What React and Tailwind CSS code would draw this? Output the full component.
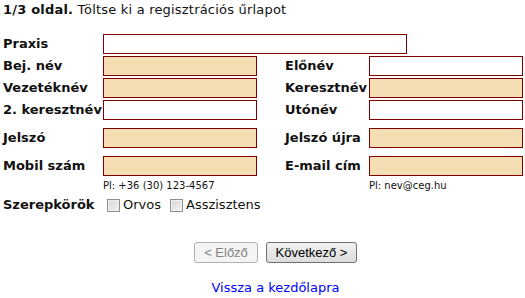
import React from "react";

const inputBase = "h-[20px] border border-[#800000] outline-none";

function Field({ label, req, wide, className = "" }) {
  return (
    <>
      <div className={`font-bold text-[13px] leading-[20px] ${className}`}>{label}</div>
      <input
        type="text"
        className={`${inputBase} ${wide ? "w-[304px]" : "w-[154px]"} ${req ? "bg-[#f5deb3]" : "bg-white"}`}
      />
    </>
  );
}

function Row({ left, right, wide }) {
  return (
    <div className="flex items-center">
      <Field {...left} wide={wide} className="w-[100px]" />
      {right && <Field {...right} className="ml-[28px] w-[84px]" />}
    </div>
  );
}

function Check({ label, className = "" }) {
  return (
    <label className={`flex items-center ${className}`}>
      <input
        type="checkbox"
        className="appearance-none w-[13px] h-[13px] m-0 border border-[#8f8f8f] bg-gradient-to-br from-[#d6d6d6] to-[#f4f4f4] shadow-[inset_0_0_0_1px_#f0f0f0]"
      />
      <span className="ml-[3px]">{label}</span>
    </label>
  );
}

export default function App() {
  return (
    <div
      className="w-[525px] h-[298px] bg-white text-[#111] overflow-hidden"
      style={{ fontFamily: '"DejaVu Sans", Verdana, sans-serif' }}
    >
      <div className="pl-[3px] pt-[2px] text-[13px] leading-[16px] tracking-[0.2px]">
        <span className="font-bold">1/3 oldal.</span> Töltse ki a regisztrációs űrlapot
      </div>

      <div className="pl-[3px] mt-[16px] flex flex-col">
        <Row left={{ label: "Praxis" }} wide />
        <div className="mt-[2px]">
          <Row left={{ label: "Bej. név", req: true }} right={{ label: "Előnév" }} />
        </div>
        <div className="mt-[2px]">
          <Row left={{ label: "Vezetéknév", req: true }} right={{ label: "Keresztnév", req: true }} />
        </div>
        <div className="mt-[2px]">
          <Row left={{ label: "2. keresztnév" }} right={{ label: "Utónév" }} />
        </div>
        <div className="mt-[8px]">
          <Row left={{ label: "Jelszó", req: true }} right={{ label: "Jelszó újra", req: true }} />
        </div>
        <div className="mt-[8px]">
          <Row left={{ label: "Mobil szám", req: true }} right={{ label: "E-mail cím", req: true }} />
        </div>
        <div className="flex text-[10px] leading-[14px] mt-[3px]">
          <div className="ml-[100px] w-[154px]">Pl: +36 (30) 123-4567</div>
          <div className="ml-[112px]">Pl: nev@ceg.hu</div>
        </div>
        <div className="flex items-center mt-[4px] text-[13px] leading-[16px]">
          <div className="w-[104px] font-bold">Szerepkörök</div>
          <Check label="Orvos" />
          <Check label="Asszisztens" className="ml-[9px]" />
        </div>
      </div>

      <div className="flex flex-col items-center pl-[26px]">
        <div
          className="flex gap-[8px] mt-[29px]"
          style={{ fontFamily: '"Liberation Sans", Arial, sans-serif' }}
        >
          <button
            disabled
            className="w-[64px] h-[21px] text-[13px] rounded-[3px] border border-[#adb2b5] bg-[#f4f4f4] text-[#838383]"
          >
            &lt; Előző
          </button>
          <button className="w-[91px] h-[21px] text-[13px] rounded-[3px] border border-[#707070] bg-gradient-to-b from-[#f2f2f2] to-[#dcdcdc] text-black">
            Következő &gt;
          </button>
        </div>
        <a href="#" className="mt-[17px] text-[13px] leading-[16px] text-[#0000ff]">
          Vissza a kezdőlapra
        </a>
      </div>
    </div>
  );
}
